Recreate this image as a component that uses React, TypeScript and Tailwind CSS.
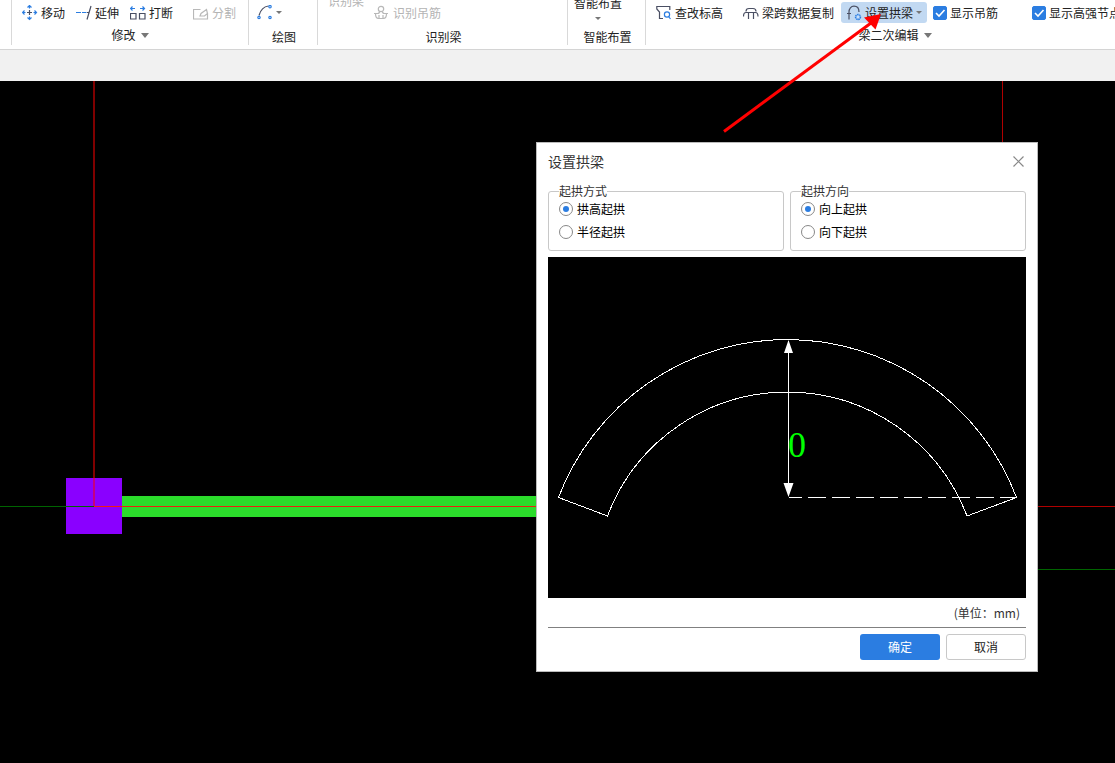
import type { ReactNode } from "react"
import { clsx } from "clsx"

const INK = "#4a4f63"
const BLUE = "#2b7de1"

function Icon({ children }: { children: ReactNode }) {
  return (
    <svg width="16" height="16" viewBox="0 0 16 16" fill="none" strokeWidth="1.2" className="shrink-0" aria-hidden="true">
      {children}
    </svg>
  )
}

const MoveIcon = () => (
  <Icon>
    <path d="M7.500 5v5M5 7.500h5" stroke={INK} />
    <path d="M5.500 2.500l2-2 2 2M5.500 12.500l2 2 2-2M2.500 5.500l-2 2 2 2M12.500 5.500l2 2-2 2M7.500 1v2.500M7.500 11.500V14M1 7.500h2.500M11.500 7.500H14" stroke={BLUE} />
  </Icon>
)

const ExtendIcon = () => (
  <Icon>
    <path d="M0 7.500h5M6 7.500h4.500" stroke={BLUE} />
    <path d="M11 7.500h2M15 1l-4 13.500" stroke={INK} />
  </Icon>
)

const BreakIcon = () => (
  <Icon>
    <path d="M.5 8.500h5.500v5.500H.5zM9.500 8.500H15v5.500H9.500z" stroke={INK} />
    <path d="M.5 3.500H5M2.500 1.500l-2 2 2 2M10 3.500h4.500M12.500 1.500l2 2-2 2" stroke={BLUE} />
  </Icon>
)

const SplitIcon = () => (
  <Icon>
    <path d="M7.500 4.500h-7v9.500h14V8.500" stroke="#b8b8b8" />
    <path d="M7 11l1-2.500 5.500-4 1 4-3 2.500z" stroke="#b8b8b8" />
  </Icon>
)

const ArcIcon = () => (
  <Icon>
    <path d="M2 10.500C3.500 5 7 1.500 11.500 1" stroke={INK} />
    <g stroke={BLUE}>
      <circle cx="2" cy="12.500" r="1.200" />
      <circle cx="13" cy="1.700" r="1.200" />
      <circle cx="13" cy="12.500" r="1.200" />
    </g>
  </Icon>
)

const HangerIcon = () => (
  <Icon>
    <g stroke="#b8b8b8">
      <circle cx="7" cy="4" r="2.700" />
      <path d="M0 8.500h3.500M14 8.500h-3.500M1.500 8.500c0 3.500 1 5 3 5h5c2 0 3-1.500 3-5M5.500 6.500c0 2-1 2-2 2M8.500 6.500c0 2 1 2 2 2M5 10v3.500M9 10v3.500" />
    </g>
  </Icon>
)

const ElevationIcon = () => (
  <Icon>
    <path d="M7 13.500H3.500V7L.8 4V1.500h13V5" stroke={INK} />
    <circle cx="11" cy="9.500" r="2.600" stroke={BLUE} />
    <path d="M12.500 11.500l2 2.500" stroke={BLUE} />
  </Icon>
)

const SpanCopyIcon = () => (
  <Icon>
    <path d="M3 6.500c0-2 1-3 3-3h4c2 0 3 1 3 3M.5 11.500c0-2.500.500-4 2.500-4h9.500c2 0 2.500 1.500 2.500 4M5.500 8v6M10.500 8v6" stroke={INK} />
  </Icon>
)

const ArchIcon = () => (
  <Icon>
    <path d="M1 8.500h4M3 14.500V7c0-3.500 2-5.800 5-5.800s5 2.300 5 5.800" stroke={INK} />
    <circle cx="12" cy="12" r="2.600" fill="#8fbcf2" stroke={BLUE} strokeDasharray="1.500 0.700" />
    <circle cx="12" cy="12" r="1" fill="#dcebfb" />
  </Icon>
)

function Caret({ large }: { large?: boolean }) {
  return large ? (
    <svg width="8" height="5" viewBox="0 0 8 5" className="shrink-0" aria-hidden="true">
      <path d="M0 0h8L4 5z" fill="#777" />
    </svg>
  ) : (
    <svg width="6" height="3" viewBox="0 0 6 3" className="shrink-0" aria-hidden="true">
      <path d="M0 0h6L3 3z" fill="#777" />
    </svg>
  )
}

function Tool({ icon, label, disabled }: { icon?: ReactNode; label: string; disabled?: boolean }) {
  return (
    <button
      type="button"
      disabled={disabled}
      className="flex h-5 shrink-0 items-center gap-[3px] whitespace-nowrap disabled:text-[#b4b4b4]"
    >
      {icon}
      {label}
    </button>
  )
}

function Group({ label, menu, className, children }: { label: string; menu?: boolean; className?: string; children: ReactNode }) {
  return (
    <section className={clsx("h-[45px] shrink-0 border-l border-[#d9d9d9]", className)}>
      <div className="flex h-[25px] items-center">{children}</div>
      {menu ? (
        <button type="button" className="mx-auto flex h-5 items-center gap-[5px] whitespace-nowrap">
          {label}
          <Caret large />
        </button>
      ) : (
        <div className="flex h-5 items-end justify-center whitespace-nowrap leading-4">{label}</div>
      )}
    </section>
  )
}

function ShowOption({ label }: { label: string }) {
  return (
    <label className="flex h-5 shrink-0 items-center gap-[3px] whitespace-nowrap">
      <span className="grid">
        <input
          type="checkbox"
          defaultChecked
          className="peer col-start-1 row-start-1 size-[14px] appearance-none rounded-[2px] border border-[#999] bg-white checked:border-[#2b7de1] checked:bg-[#2b7de1]"
        />
        <svg
          viewBox="0 0 14 14"
          className="pointer-events-none invisible col-start-1 row-start-1 size-[14px] peer-checked:visible"
          aria-hidden="true"
        >
          <path d="M3 7l3 3 5.500-6" fill="none" stroke="#fff" strokeWidth="1.600" />
        </svg>
      </span>
      {label}
    </label>
  )
}

function Ribbon() {
  return (
    <header className="flex h-[50px] overflow-hidden border-b border-[#d4d4d4] bg-white pl-[11px] text-[#222]">
      <Group label="修改" menu className="w-[237px]">
        <div className="ml-2.5 flex gap-[11px]">
          <Tool icon={<MoveIcon />} label="移动" />
          <Tool icon={<ExtendIcon />} label="延伸" />
          <Tool icon={<BreakIcon />} label="打断" />
        </div>
        <div className="ml-5">
          <Tool icon={<SplitIcon />} label="分割" disabled />
        </div>
      </Group>

      <Group label="绘图" className="w-[69px] pl-0.5">
        <button type="button" aria-label="弧线" className="ml-1.5 flex h-5 items-center gap-[3px]">
          <ArcIcon />
          <Caret />
        </button>
      </Group>

      <Group label="识别梁" className="w-[250px] pl-0.5">
        <div className="ml-2 flex items-center gap-2.5">
          <div className="mb-6">
            <Tool label="识别梁" disabled />
          </div>
          <Tool icon={<HangerIcon />} label="识别吊筋" disabled />
        </div>
      </Group>

      <Group label="智能布置" className="w-[78px] pl-0.5">
        <button type="button" className="mb-1.5 ml-1 flex h-6 flex-col items-center justify-end gap-1.5 whitespace-nowrap pb-0.5 leading-4">
          智能布置
          <Caret />
        </button>
      </Group>

      <Group label="梁二次编辑" menu className="w-[499px]">
        <div className="ml-2.5">
          <Tool icon={<ElevationIcon />} label="查改标高" />
        </div>
        <div className="ml-5">
          <Tool icon={<SpanCopyIcon />} label="梁跨数据复制" />
        </div>
        <button
          type="button"
          className="ml-[7px] flex h-[21px] shrink-0 items-center gap-[3px] whitespace-nowrap rounded-[3px] bg-[#c2d9f2] px-[5px]"
        >
          <ArchIcon />
          设置拱梁
          <Caret />
        </button>
        <div className="ml-1.5 flex gap-[34px]">
          <ShowOption label="显示吊筋" />
          <ShowOption label="显示高强节点" />
        </div>
      </Group>
    </header>
  )
}

function Drawing() {
  return (
    <svg className="absolute inset-0 size-full" aria-hidden="true">
      <rect x="122" y="415" width="880" height="21" fill="#2bdc2b" />
      <rect x="66" y="397" width="56" height="56" fill="#8a00ff" />
      <line x1="0" y1="425.500" x2="94" y2="425.500" stroke="#006400" />
      <line x1="94" y1="0" x2="94" y2="425" stroke="#ff0000" />
      <line x1="94" y1="425.500" x2="1002" y2="425.500" stroke="#ee2010" />
      <line x1="1002" y1="425.500" x2="100%" y2="425.500" stroke="#b00000" />
      <line x1="1002.500" y1="0" x2="1002.500" y2="425" stroke="#b00000" />
      <line x1="1002" y1="488.500" x2="100%" y2="488.500" stroke="#006400" />
    </svg>
  )
}

function ArchPreview() {
  return (
    <svg viewBox="0 0 478 341" className="mt-1.5 block w-full bg-black" fill="none" stroke="#fff">
      <g shapeRendering="crispEdges">
        <path d="M10.500 240.500A245 245 0 0 1 468.500 240.500L419 259A192.300 192.300 0 0 0 59.500 259Z" />
        <path d="M240.500 84V238" />
        <path d="M241 240.500H468" strokeDasharray="18 6" strokeDashoffset="5" />
      </g>
      <path d="M240.500 83l4.500 13h-9zM240.500 240l5-14h-10z" fill="#fff" stroke="none" />
      <text x="240" y="200" fill="#00ff00" stroke="none" className="font-['Liberation_Serif',serif] text-[36px]">
        0
      </text>
    </svg>
  )
}

function RadioGroup({ name, legend, options }: { name: string; legend: string; options: string[] }) {
  return (
    <fieldset className="min-w-0 flex-1 rounded-[3px] border border-[#c8c8c8] px-2.5 pb-2 text-black">
      <legend className="leading-4 text-[#333]">{legend}</legend>
      <div className="flex flex-col gap-[3px]">
        {options.map((option, i) => (
          <label key={option} className="flex h-5 items-center gap-1">
            <input
              type="radio"
              name={name}
              defaultChecked={i === 0}
              className="grid size-[14px] appearance-none place-items-center rounded-full border border-[#888] bg-white checked:before:size-1.5 checked:before:rounded-full checked:before:bg-[#2b7de1] checked:before:content-['']"
            />
            {option}
          </label>
        ))}
      </div>
    </fieldset>
  )
}

function ArchDialog() {
  return (
    <div
      role="dialog"
      aria-labelledby="arch-title"
      className="absolute left-[536px] top-[61px] w-[502px] border border-[#bbb] bg-white px-[11px] pb-[11px] text-[#333]"
    >
      <div className="mb-1 flex h-9 items-center justify-between">
        <h2 id="arch-title" className="text-sm">设置拱梁</h2>
        <button type="button" aria-label="关闭" className="px-0.5">
          <svg width="11" height="11" viewBox="0 0 11 11" stroke="#888" strokeWidth="1.200" aria-hidden="true">
            <path d="M.5.5l10 10M10.500.5l-10 10" />
          </svg>
        </button>
      </div>
      <div className="flex gap-1.5">
        <RadioGroup name="method" legend="起拱方式" options={["拱高起拱", "半径起拱"]} />
        <RadioGroup name="direction" legend="起拱方向" options={["向上起拱", "向下起拱"]} />
      </div>
      <ArchPreview />
      <div className="flex h-[30px] items-center justify-end border-b border-[#808080] pr-1.5">(单位：mm)</div>
      <div className="mt-1.5 flex justify-end gap-1.5">
        <button type="button" className="h-[26px] w-20 rounded-[3px] bg-[#2b7de1] text-white">
          确定
        </button>
        <button type="button" className="h-[26px] w-20 rounded-[3px] border border-[#c8c8c8] bg-white text-[#222]">
          取消
        </button>
      </div>
    </div>
  )
}

export default function App() {
  return (
    <div className="relative flex min-h-screen flex-col overflow-hidden bg-[#f1f1f1] font-['Noto_Sans_CJK_SC',sans-serif] text-xs">
      <Ribbon />
      <main className="relative mt-[31px] min-h-[600px] flex-1 bg-black">
        <Drawing />
        <ArchDialog />
      </main>
      <svg className="pointer-events-none absolute left-0 top-0 size-full" aria-hidden="true">
        <path d="M724 131.500L871 23" stroke="#ff0000" strokeWidth="3" />
        <path d="M881 14l-17 3.500 11.500 12z" fill="#ff0000" />
      </svg>
    </div>
  )
}
